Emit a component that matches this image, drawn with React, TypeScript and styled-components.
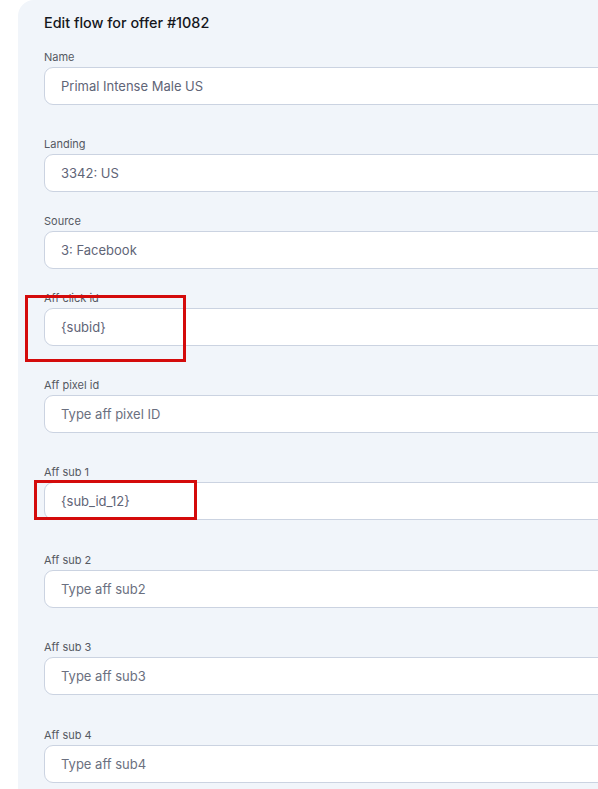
import * as React from "react";
import styled, { createGlobalStyle } from "styled-components";

const GlobalStyle = createGlobalStyle`
	html, body {
		margin: 0;
		padding: 0;
		background: #ffffff;
		overflow: hidden;
	}
	body {
		font-family: Inter, "Noto Sans", sans-serif;
	}
`;

const Page = styled.div`
	width: 598px;
	height: 789px;
	overflow: hidden;
	padding-left: 18px;
	box-sizing: border-box;
`;

const Panel = styled.div`
	width: 640px;
	min-height: 800px;
	background: #f1f5fa;
	border-top-left-radius: 16px;
	padding: 13px 0 0 26px;
	box-sizing: border-box;
	display: flex;
	flex-direction: column;
`;

const Title = styled.h3`
	margin: 0 0 17px;
	font-size: 14.4px;
	line-height: 20px;
	font-weight: 500;
	color: #15171c;
`;

const Field = styled.div<{ $space: number }>`
	position: relative;
	display: flex;
	flex-direction: column;
	gap: 3px;
	margin-top: ${(p) => p.$space}px;
`;

const Label = styled.label`
	font-size: 11px;
	line-height: 14px;
	color: #555962;
`;

const Input = styled.input`
	height: 38px;
	box-sizing: border-box;
	border: 1px solid #cbd3e1;
	border-radius: 9px;
	background: #ffffff;
	padding: 0 16px;
	font-family: inherit;
	font-size: 13px;
	color: #5f6577;
	outline: none;

	&::placeholder {
		color: #6b7080;
	}
`;

const Mark = styled.div<{ $left: number; $top: number; $w: number; $h: number }>`
	position: absolute;
	left: ${(p) => p.$left}px;
	top: ${(p) => p.$top}px;
	width: ${(p) => p.$w}px;
	height: ${(p) => p.$h}px;
	border: 3px solid #d40b0b;
	box-sizing: border-box;
	pointer-events: none;
`;

interface FieldData {
	label: string;
	value?: string;
	placeholder?: string;
	space: number;
	mark?: { left: number; top: number; w: number; h: number };
}

const fields: FieldData[] = [
	{ label: "Name", value: "Primal Intense Male US", space: 0 },
	{ label: "Landing", value: "3342: US", space: 32 },
	{ label: "Source", value: "3: Facebook", space: 22 },
	{ label: "Aff click id", value: "{subid}", space: 22, mark: { left: -19, top: 4, w: 161, h: 67 } },
	{ label: "Aff pixel id", placeholder: "Type aff pixel ID", space: 32 },
	{ label: "Aff sub 1", value: "{sub_id_12}", space: 32, mark: { left: -10, top: 15, w: 163, h: 40 } },
	{ label: "Aff sub 2", placeholder: "Type aff sub2", space: 33 },
	{ label: "Aff sub 3", placeholder: "Type aff sub3", space: 32 },
	{ label: "Aff sub 4", placeholder: "Type aff sub4", space: 33 },
];

function App() {
	return (
		<>
			<GlobalStyle />
			<Page>
				<Panel>
					<Title>Edit flow for offer #1082</Title>
					{fields.map((f) => (
						<Field key={f.label} $space={f.space}>
							<Label>{f.label}</Label>
							<Input defaultValue={f.value} placeholder={f.placeholder} readOnly />
							{f.mark && <Mark $left={f.mark.left} $top={f.mark.top} $w={f.mark.w} $h={f.mark.h} />}
						</Field>
					))}
				</Panel>
			</Page>
		</>
	);
}

export default App;
